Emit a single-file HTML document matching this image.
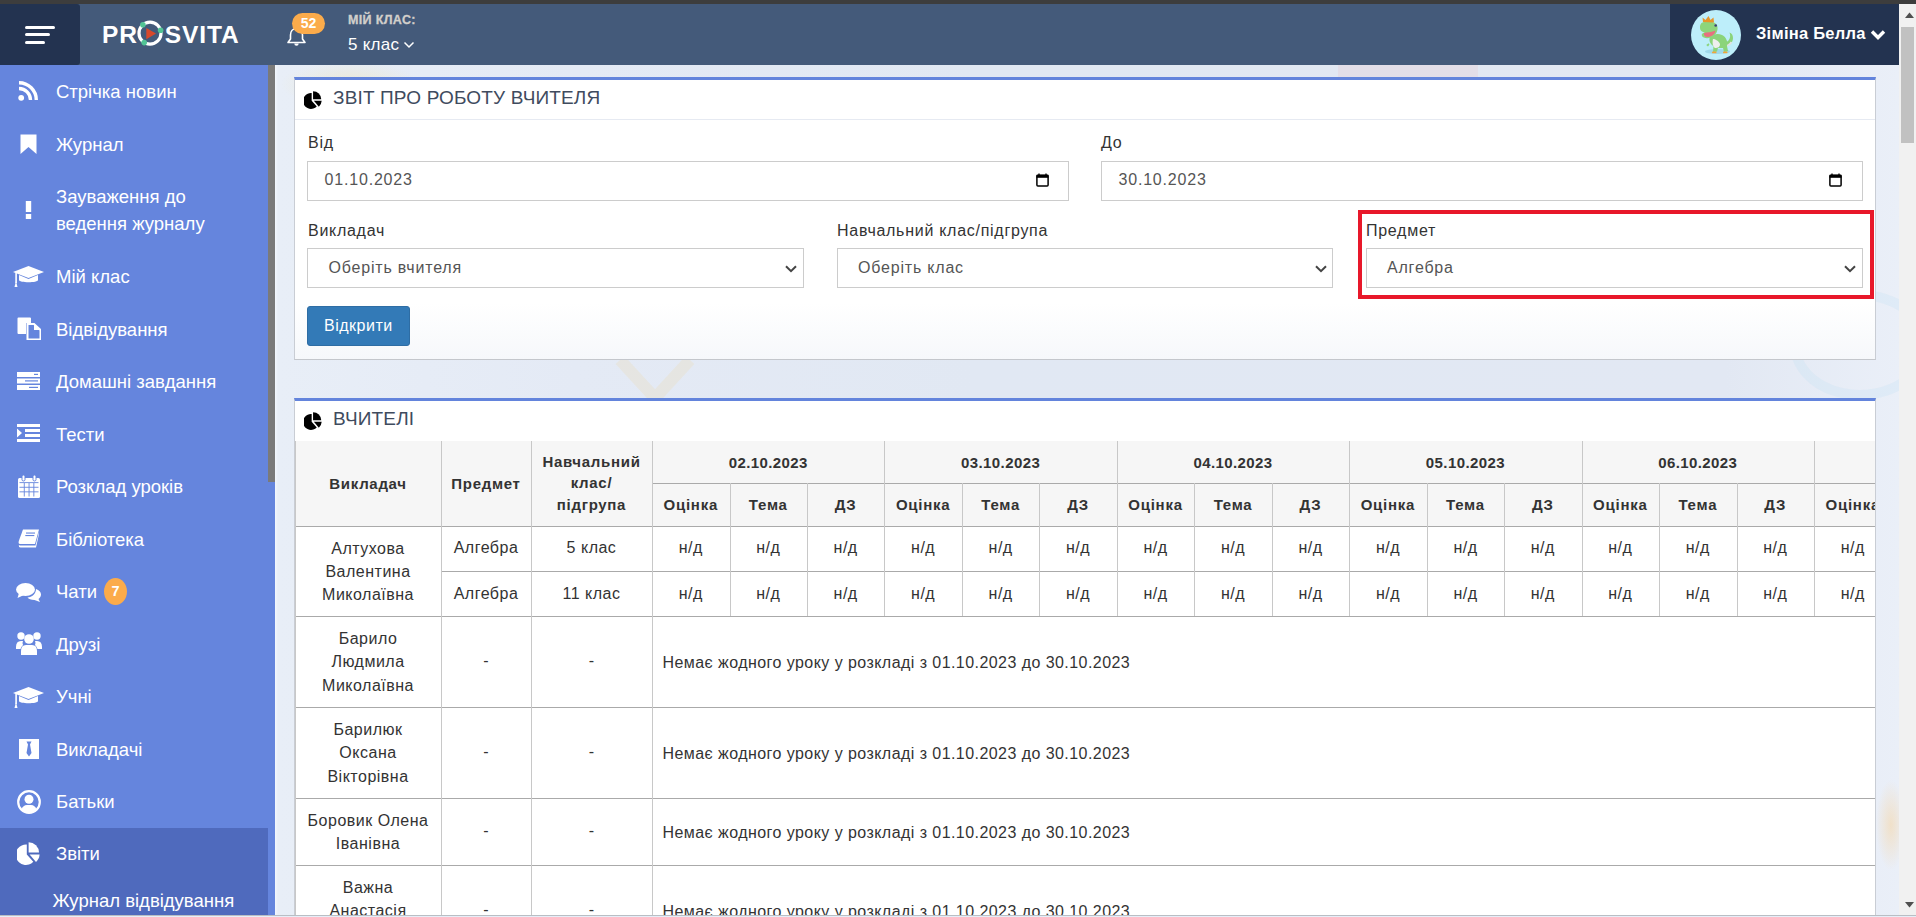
<!DOCTYPE html>
<html><head><meta charset="utf-8">
<style>
*{box-sizing:border-box;margin:0;padding:0}
html,body{width:1916px;height:917px;overflow:hidden;font-family:"Liberation Sans",sans-serif;background:#e3e9f4}
.abs{position:absolute}
#topstrip{left:0;top:0;width:1916px;height:4px;background:#3d3d3d}
#hdr{left:0;top:4px;width:1899px;height:61px;background:#445a7a}
#burger{left:0;top:4px;width:80px;height:61px;background:#233350;border-radius:0 3px 3px 0}
#burger i{position:absolute;left:25px;height:3px;background:#fff;border-radius:2px}
#user{left:1670px;top:4px;width:229px;height:61px;background:#233350}
#vscroll{left:1899px;top:4px;width:17px;height:913px;background:#f1f1f1}
#side{left:0;top:65px;width:275px;height:852px;background:#6585dd;overflow:hidden}
#sthumb{left:268px;top:65px;width:7px;height:417px;background:#7a7a7a}
.nav{position:absolute;left:0;width:268px;color:#fff;font-size:18.5px;line-height:26.5px}
.navt{left:56px;color:#fff;font-size:18.5px;line-height:26.5px;white-space:nowrap}
.nav .t{position:absolute;left:56px;white-space:nowrap}
.nav svg{position:absolute}
#content{left:275px;top:65px;width:1624px;height:852px;overflow:hidden;background:linear-gradient(90deg,#f3f7fd 0px,#e8eef7 3px,#e4eaf5 300px,#e1e8f3 700px,#e2e8f3 1450px,#eaeff8 1624px)}
.panel{position:absolute;left:20px;width:1580px;background:#fff;border-top:3px solid #6384dc;border-left:1px solid #cfd3da;border-right:1px solid #d8dce3}
.ptitle{position:absolute;left:38px;font-size:19px;letter-spacing:0.15px;color:#3f4b5e;white-space:nowrap}
.lbl{position:absolute;font-size:16px;color:#333;white-space:nowrap;letter-spacing:0.72px}
.inp{position:absolute;height:40px;border:1px solid #cccccc;background:#fff;font-size:16px;color:#555}
.inp .v{position:absolute;top:10px;white-space:nowrap}
</style></head><body>
<div id="topstrip" class="abs"></div>
<div id="hdr" class="abs"></div>
<div id="burger" class="abs"><i style="top:22px;width:30px"></i><i style="top:29px;width:25px"></i><i style="top:37px;width:20px"></i></div>
<div id="user" class="abs"></div>
<!-- logo -->
<div class="abs" style="left:102px;top:19.5px;height:30px;font-size:24.5px;font-weight:bold;color:#fff;letter-spacing:0.9px;line-height:30px;white-space:nowrap">PR<span style="display:inline-block;width:27px"></span>SVITA</div>
<svg class="abs" style="left:136px;top:19px" width="30" height="30" viewBox="0 0 30 30">
<circle cx="14" cy="14.2" r="11" fill="none" stroke="#fff" stroke-width="3.2"/>
<path d="M10.3 8.9 L20 14.6 L10.3 20.3 Z" fill="#d9482b"/>
<circle cx="6.9" cy="5.8" r="2.8" fill="#52c495"/><circle cx="24.6" cy="11.3" r="2.8" fill="#52c495"/><circle cx="8.2" cy="23.6" r="2.8" fill="#52c495"/>
</svg>
<!-- bell -->
<svg class="abs" style="left:286px;top:26px" width="21" height="21" viewBox="0 0 21 21">
<path d="M10.5 2.5 C6.5 2.5 4.5 5.5 4.5 9 L4.5 13 L2 16.5 L19 16.5 L16.5 13 L16.5 9 C16.5 5.5 14.5 2.5 10.5 2.5 Z" fill="none" stroke="#fff" stroke-width="1.6" stroke-linejoin="round"/>
<path d="M8.3 17.5 a2.2 2.2 0 0 0 4.4 0 Z" fill="#fff"/>
</svg>
<div class="abs" style="left:292px;top:13px;width:33px;height:21px;border-radius:11px;background:#fbab4b;color:#fff;font-weight:bold;font-size:14px;line-height:21px;text-align:center">52</div>
<div class="abs" style="left:348px;top:12px;font-size:12.5px;font-weight:bold;color:#d2cfcb;line-height:16px;white-space:nowrap;letter-spacing:0.35px;-webkit-text-stroke:0.3px #d2cfcb">МІЙ КЛАС:</div>
<div class="abs" style="left:348px;top:34px;font-size:17px;color:#fff;line-height:22px;white-space:nowrap;letter-spacing:0.25px">5 клас</div>
<svg class="abs" style="left:403px;top:40px" width="12" height="10" viewBox="0 0 12 10"><path d="M1.5 2.5 L6 7 L10.5 2.5" fill="none" stroke="#fff" stroke-width="1.5"/></svg>
<!-- user -->
<div class="abs" style="left:1691px;top:10px;width:50px;height:50px;border-radius:50%;background:#bdeefa;overflow:hidden">
<svg width="50" height="50" viewBox="0 0 50 50">
<ellipse cx="26.5" cy="41.5" rx="12.5" ry="2.6" fill="#9fd9ea"/>
<path d="M32 36.5 C37 37 42 33.5 42 28 C42 25 40.5 23 38.5 22.5 C39.5 25 39.5 28 37.5 30.5 C36 32 34 32.5 32 32 Z" fill="#8bd47a"/>
<path d="M33 36 C36 36 39 34.5 40.5 32" fill="none" stroke="#e2e2e2" stroke-width="1.6"/>
<path d="M19 27 C22 24 27 23 31 25 C35 27 37 31 36 36 L37 41 L33 42 L32 38 L27 38 L26 41.5 L22 42 L22.5 36 C19 34 17.5 30 19 27 Z" fill="#8bd47a"/>
<path d="M22 29 C24 29 28 31 29 34 C29 37 27 38 24 38 C22 37 21 33 22 29 Z" fill="#eeeeee"/>
<path d="M9 18 C8.5 13 12 11 17 11.5 C22 11.5 26 13 26.5 17 C27 21 25 25.5 20 27.5 C16 29 12 28 11 26 C10 24 11.5 23 14 22.5 C11 22 9 20.5 9 18 Z" fill="#8dd57b"/>
<path d="M13 23 C16 22.5 21 22 24.5 20.5 C24 24 21 26.5 17 27 C14 27.3 12.5 25 13 23 Z" fill="#e7707f"/>
<circle cx="24.7" cy="15.5" r="1.3" fill="#3c3f7a"/>
<path d="M12 12 L11.5 7.5 L14.5 10 L17.5 6 L19.5 10 L22.5 7.5 L23 12.5 Z" fill="#e7962b"/>
<path d="M18 34 L16.5 35 L17.5 36" fill="none" stroke="#8bd47a" stroke-width="1.6"/>
<rect x="21" y="41.5" width="4.5" height="1.8" rx="0.9" fill="#f1a63a"/><rect x="32" y="41.5" width="4.5" height="1.8" rx="0.9" fill="#f1a63a"/>
</svg></div>
<div class="abs" style="left:1756px;top:21.5px;font-size:16.5px;font-weight:bold;color:#fff;line-height:22px;white-space:nowrap;letter-spacing:0.25px">Зіміна Белла</div>
<svg class="abs" style="left:1870px;top:28px" width="16" height="13" viewBox="0 0 16 13"><path d="M2 3.5 L8 9.5 L14 3.5" fill="none" stroke="#fff" stroke-width="3.4"/></svg>
<!-- scrollbar -->
<div id="vscroll" class="abs"></div>
<svg class="abs" style="left:1899px;top:4px" width="17" height="22" viewBox="0 0 17 22"><path d="M6 14 L10.5 8.5 L15 14 Z" fill="#505050"/></svg>
<div class="abs" style="left:1901px;top:27px;width:13px;height:116px;background:#c1c1c1"></div>
<div id="side" class="abs"></div>
<div id="sthumb" class="abs"></div>
<div class="abs" style="left:0;top:828px;width:268px;height:89px;background:#4f6abd"></div>
<div class="abs navt" style="top:78.53px">Стрічка новин</div>
<div class="abs navt" style="top:131.53px">Журнал</div>
<div class="abs navt" style="top:184.33px">Зауваження до<br>ведення журналу</div>
<div class="abs navt" style="top:264.13px">Мій клас</div>
<div class="abs navt" style="top:316.63px">Відвідування</div>
<div class="abs navt" style="top:369.13px">Домашні завдання</div>
<div class="abs navt" style="top:421.63px">Тести</div>
<div class="abs navt" style="top:474.13px">Розклад уроків</div>
<div class="abs navt" style="top:526.63px">Бібліотека</div>
<div class="abs navt" style="top:579.13px">Чати</div>
<div class="abs navt" style="top:631.63px">Друзі</div>
<div class="abs navt" style="top:684.13px">Учні</div>
<div class="abs navt" style="top:736.63px">Викладачі</div>
<div class="abs navt" style="top:789.13px">Батьки</div>
<div class="abs navt" style="top:841.13px">Звіти</div>
<div class="abs navt" style="left:52.5px;top:888.4px">Журнал відвідування</div>
<div class="abs" style="left:104px;top:578px;width:23px;height:27px;border-radius:50%;background:#fbab4b;color:#fff;font-weight:bold;font-size:14.5px;line-height:27px;text-align:center">7</div>

<svg class="abs" style="left:18px;top:81px" width="21" height="20" viewBox="0 0 21 20"><circle cx="3.2" cy="16.8" r="2.9" fill="#fff"/><path d="M1 7.5 A11.5 11.5 0 0 1 12.5 19" fill="none" stroke="#fff" stroke-width="3.4"/><path d="M1 1.7 A17.3 17.3 0 0 1 18.3 19" fill="none" stroke="#fff" stroke-width="3.4"/></svg>
<svg class="abs" style="left:20px;top:134px" width="17" height="20" viewBox="0 0 17 20"><path d="M0.5 0.5 H16.5 V20 L8.5 13 L0.5 20 Z" fill="#fff"/></svg>
<svg class="abs" style="left:25px;top:201px" width="7" height="18" viewBox="0 0 7 18"><rect x="0.8" y="0" width="5.4" height="11" fill="#fff"/><rect x="0.8" y="13" width="5.4" height="5" fill="#fff"/></svg>
<svg class="abs" style="left:13px;top:266px" width="31" height="21" viewBox="0 0 31 21"><path d="M15.5 0 L31 6 L15.5 12 L0 6 Z" fill="#fff"/><path d="M6 9 L6 14 C6 17 25 17 25 14 L25 9 L15.5 13 Z" fill="#fff"/><rect x="2.3" y="7" width="1.6" height="10" fill="#fff"/><path d="M1.5 21 L3 15 L4.5 21 Z" fill="#fff"/></svg>
<svg class="abs" style="left:17px;top:317px" width="24" height="23" viewBox="0 0 24 23"><path d="M0.5 1.5 Q0.5 0.5 1.5 0.5 H13 Q14 0.5 14 1.5 V6 H9 V17 H1.5 Q0.5 17 0.5 16 Z" fill="#fff"/><path d="M10.5 7 H17 L23.5 13 V22.5 H10.5 Z" fill="none" stroke="#fff" stroke-width="2"/><path d="M17 7 V13 H23.5" fill="#fff"/></svg>
<svg class="abs" style="left:17px;top:372px" width="23" height="18" viewBox="0 0 23 18"><rect x="0" y="0" width="23" height="5" fill="#fff"/><rect x="0" y="6.5" width="23" height="5" fill="#fff"/><rect x="0" y="13" width="23" height="5" fill="#fff"/><rect x="17" y="1.8" width="4" height="1.2" fill="#6585dd"/><rect x="8" y="8.3" width="13" height="1.2" fill="#6585dd"/><rect x="12" y="14.8" width="9" height="1.2" fill="#6585dd"/></svg>
<svg class="abs" style="left:17px;top:424px" width="23" height="18" viewBox="0 0 23 18"><rect x="0" y="0" width="23" height="3" fill="#fff"/><rect x="8" y="5" width="15" height="3" fill="#fff"/><rect x="8" y="10" width="15" height="3" fill="#fff"/><rect x="0" y="15" width="23" height="3" fill="#fff"/><path d="M0 4.5 L5 9 L0 13.5 Z" fill="#fff"/></svg>
<svg class="abs" style="left:18px;top:475px" width="22" height="23" viewBox="0 0 22 23"><rect x="0" y="3" width="22" height="20" rx="1.5" fill="#fff"/><rect x="4" y="0" width="3" height="6" rx="1.5" fill="#fff" stroke="#6585dd" stroke-width="1"/><rect x="15" y="0" width="3" height="6" rx="1.5" fill="#fff" stroke="#6585dd" stroke-width="1"/><g fill="#6585dd"><rect x="5.8" y="8" width="0.9" height="13.5"/><rect x="10.6" y="8" width="0.9" height="13.5"/><rect x="15.4" y="8" width="0.9" height="13.5"/><rect x="1.5" y="11.8" width="19" height="0.9"/><rect x="1.5" y="16.4" width="19" height="0.9"/><rect x="1.5" y="7.2" width="19" height="0.9"/></g></svg>
<svg class="abs" style="left:18px;top:529px" width="22" height="20" viewBox="0 0 22 20"><path d="M5 0.5 H21 L17 15 H2 Q0 15 0.8 12 Z" fill="#fff"/><path d="M2 16.5 H17.5 L21 3 V5 L18 18.5 H2.5 Q0.5 18.5 0.8 16 Z" fill="#fff"/><rect x="8" y="3.5" width="9" height="1.1" fill="#6585dd"/><rect x="7.3" y="6" width="9" height="1.1" fill="#6585dd"/></svg>
<svg class="abs" style="left:16px;top:583px" width="25" height="19" viewBox="0 0 25 19"><ellipse cx="9.5" cy="6.5" rx="9.5" ry="6.5" fill="#fff"/><path d="M3 10 L1.5 15 L8 12 Z" fill="#fff"/><path d="M20 6 C23 7 25 9 25 11.5 C25 13.5 23.5 15 22.5 16 L24 19 L18.5 17 C15 17 12.5 16 11.5 14.5 C16 14 20 11 20 6 Z" fill="#fff"/></svg>
<svg class="abs" style="left:16px;top:632px" width="26" height="23" viewBox="0 0 26 23"><circle cx="5" cy="4" r="3.7" fill="#fff"/><circle cx="21" cy="4" r="3.7" fill="#fff"/><circle cx="13" cy="7" r="4.8" fill="#fff"/><path d="M0 15 Q0 9 5 9 H7 Q6 11 7 13 Q5 15 4.5 17 H0 Z" fill="#fff"/><path d="M26 15 Q26 9 21 9 H19 Q20 11 19 13 Q21 15 21.5 17 H26 Z" fill="#fff"/><path d="M5 23 V19 Q5 13 10 13 H16 Q21 13 21 19 V23 Z" fill="#fff"/></svg>
<svg class="abs" style="left:13px;top:687px" width="31" height="21" viewBox="0 0 31 21"><path d="M15.5 0 L31 6 L15.5 12 L0 6 Z" fill="#fff"/><path d="M6 9 L6 14 C6 17 25 17 25 14 L25 9 L15.5 13 Z" fill="#fff"/><rect x="2.3" y="7" width="1.6" height="10" fill="#fff"/><path d="M1.5 21 L3 15 L4.5 21 Z" fill="#fff"/></svg>
<svg class="abs" style="left:19px;top:739px" width="20" height="20" viewBox="0 0 20 20"><rect x="0" y="0" width="20" height="20" fill="#fff"/><path d="M7.5 2.5 H12.5 L11 5.5 L12.5 14 L10 17.5 L7.5 14 L9 5.5 Z" fill="#6585dd"/></svg>
<svg class="abs" style="left:17px;top:790px" width="24" height="24" viewBox="0 0 24 24"><circle cx="12" cy="12" r="10.8" fill="none" stroke="#fff" stroke-width="2.2"/><circle cx="12" cy="9.3" r="4.5" fill="#fff"/><path d="M4.5 19.5 Q6 15 10 15 H14 Q18 15 19.5 19.5 Q16.5 22.8 12 22.8 Q7.5 22.8 4.5 19.5 Z" fill="#fff"/></svg>
<svg class="abs" style="left:17px;top:842px" width="23" height="23" viewBox="0 0 23 23"><path d="M9.8 2.6 V12.4 L16.3 19.8 A10.2 10.2 0 1 1 9.8 2.6 Z" fill="#fff"/><path d="M11.6 0.3 A10.4 10.4 0 0 1 22 10.6 H11.6 Z" fill="#fff"/><path d="M12.6 12.6 H22.6 A10.6 10.6 0 0 1 19 20 Z" fill="#fff"/></svg>

<div id="content" class="abs">
<div class="abs" style="left:5px;top:-3px;width:140px;height:45px;border-radius:50%;background:radial-gradient(closest-side,rgba(240,228,170,0.45),rgba(240,228,170,0));"></div>
<div class="abs" style="left:1063px;top:0px;width:140px;height:12px;background:rgba(230,190,200,0.25)"></div>
<svg class="abs" style="left:335px;top:293px" width="90" height="42" viewBox="0 0 90 42"><path d="M10 2 L45 40 L80 2" fill="none" stroke="rgba(235,215,160,0.22)" stroke-width="12"/></svg>
<div class="abs" style="left:1515px;top:225px;width:140px;height:110px;border-radius:50%;border:10px solid rgba(190,225,245,0.25)"></div>
<div class="abs" style="left:1601px;top:715px;width:30px;height:90px;background:radial-gradient(closest-side,rgba(245,215,170,0.6),rgba(245,215,170,0))"></div>
</div>
<div class="abs" style="left:294px;top:77px;width:1582px;height:283px;background:linear-gradient(#fff 0%,#fff 80%,#f6f8fb 100%);border-top:3px solid #6384dc;border-left:1px solid #c9cdd4;border-right:1px solid #c9cdd4;border-bottom:1.5px solid #c4c7cc"></div>
<div class="abs" style="left:295px;top:119px;width:1580px;height:1px;background:#e6eaf2"></div>
<svg class="abs" style="left:304px;top:91px" width="18" height="18" viewBox="0 0 23 23"><path d="M9.8 2.6 V12.4 L16.3 19.8 A10.2 10.2 0 1 1 9.8 2.6 Z" fill="#000"/><path d="M11.6 0.3 A10.4 10.4 0 0 1 22 10.6 H11.6 Z" fill="#000"/><path d="M12.6 12.6 H22.6 A10.6 10.6 0 0 1 19 20 Z" fill="#000"/></svg>
<div class="abs ptitle" style="left:333px;top:86.3px;line-height:24px">ЗВІТ ПРО РОБОТУ ВЧИТЕЛЯ</div>
<div class="abs lbl" style="left:308px;top:133.3px;line-height:20px">Від</div>
<div class="abs lbl" style="left:1101px;top:133.3px;line-height:20px">До</div>
<div class="abs lbl" style="left:308px;top:221.1px;line-height:20px">Викладач</div>
<div class="abs lbl" style="left:837px;top:221.1px;line-height:20px">Навчальний клас/підгрупа</div>
<div class="abs lbl" style="left:1366px;top:221.1px;line-height:20px">Предмет</div>
<div class="abs" style="left:307px;top:161px;width:762px;height:40px;border:1px solid #cccccc;background:#fff"></div><div class="abs" style="left:324.6px;top:169.9px;font-size:16px;line-height:20px;color:#555;white-space:nowrap;letter-spacing:0.8px">01.10.2023</div><svg class="abs" style="left:1036px;top:173px" width="13" height="14" viewBox="0 0 13 14"><path d="M3 0.5 V2 M10 0.5 V2" stroke="#000" stroke-width="1.3"/><rect x="0.9" y="2.2" width="11.2" height="10.9" rx="1" fill="none" stroke="#000" stroke-width="1.5"/><rect x="0.5" y="1.8" width="12" height="3" fill="#000"/></svg>
<div class="abs" style="left:1101px;top:161px;width:762px;height:40px;border:1px solid #cccccc;background:#fff"></div><div class="abs" style="left:1118.5px;top:169.9px;font-size:16px;line-height:20px;color:#555;white-space:nowrap;letter-spacing:0.8px">30.10.2023</div><svg class="abs" style="left:1829px;top:173px" width="13" height="14" viewBox="0 0 13 14"><path d="M3 0.5 V2 M10 0.5 V2" stroke="#000" stroke-width="1.3"/><rect x="0.9" y="2.2" width="11.2" height="10.9" rx="1" fill="none" stroke="#000" stroke-width="1.5"/><rect x="0.5" y="1.8" width="12" height="3" fill="#000"/></svg>
<div class="abs" style="left:307px;top:248px;width:497px;height:40px;border:1px solid #cccccc;background:#fff"></div><div class="abs" style="left:328.5px;top:258.1px;font-size:16px;line-height:20px;color:#555;white-space:nowrap;letter-spacing:0.8px">Оберіть вчителя</div><svg class="abs" style="left:785px;top:265px" width="12" height="8" viewBox="0 0 12 8"><path d="M1 1.2 L6 6.2 L11 1.2" fill="none" stroke="#444" stroke-width="2"/></svg>
<div class="abs" style="left:837px;top:248px;width:496px;height:40px;border:1px solid #cccccc;background:#fff"></div><div class="abs" style="left:858.0px;top:258.1px;font-size:16px;line-height:20px;color:#555;white-space:nowrap;letter-spacing:0.8px">Оберіть клас</div><svg class="abs" style="left:1315px;top:265px" width="12" height="8" viewBox="0 0 12 8"><path d="M1 1.2 L6 6.2 L11 1.2" fill="none" stroke="#444" stroke-width="2"/></svg>
<div class="abs" style="left:1366px;top:248px;width:497px;height:40px;border:1px solid #cccccc;background:#fff"></div><div class="abs" style="left:1387.0px;top:258.1px;font-size:16px;line-height:20px;color:#555;white-space:nowrap;letter-spacing:0.8px">Алгебра</div><svg class="abs" style="left:1844px;top:265px" width="12" height="8" viewBox="0 0 12 8"><path d="M1 1.2 L6 6.2 L11 1.2" fill="none" stroke="#444" stroke-width="2"/></svg>
<div class="abs" style="left:1358px;top:210px;width:516px;height:89px;border:4.5px solid #e8182a"></div>
<div class="abs" style="left:307px;top:306px;width:103px;height:40px;background:#337ab7;border:1px solid #2e6da4;border-radius:3px"></div>
<div class="abs" style="left:324px;top:315.8px;font-size:16px;line-height:20px;color:#fff;white-space:nowrap;letter-spacing:0.5px">Відкрити</div>
<!--TABLE-->
<div class="abs" style="left:0;top:0;width:1876px;height:917px;overflow:hidden"><div class="abs" style="left:294px;top:398px;width:1582px;height:530px;background:#fff;border-top:3px solid #6384dc;border-left:1px solid #c9cdd4;border-right:1px solid #c9cdd4"></div>
<svg class="abs" style="left:304px;top:412px" width="18" height="18" viewBox="0 0 23 23"><path d="M9.8 2.6 V12.4 L16.3 19.8 A10.2 10.2 0 1 1 9.8 2.6 Z" fill="#000"/><path d="M11.6 0.3 A10.4 10.4 0 0 1 22 10.6 H11.6 Z" fill="#000"/><path d="M12.6 12.6 H22.6 A10.6 10.6 0 0 1 19 20 Z" fill="#000"/></svg>
<div class="abs ptitle" style="left:333px;top:407.3px;line-height:24px">ВЧИТЕЛІ</div>
<div class="abs" style="left:295px;top:441px;width:1580px;height:85px;background:#f6f6f6"></div>
<div class="abs" style="left:295.0px;top:526.0px;width:1580.0px;height:1px;background:#aaaaaa"></div>
<div class="abs" style="left:295.0px;top:616.0px;width:1580.0px;height:1px;background:#aaaaaa"></div>
<div class="abs" style="left:295.0px;top:707.0px;width:1580.0px;height:1px;background:#aaaaaa"></div>
<div class="abs" style="left:295.0px;top:798.0px;width:1580.0px;height:1px;background:#aaaaaa"></div>
<div class="abs" style="left:295.0px;top:865.0px;width:1580.0px;height:1px;background:#aaaaaa"></div>
<div class="abs" style="left:652.0px;top:483.0px;width:1223.0px;height:1px;background:#aaaaaa"></div>
<div class="abs" style="left:441.0px;top:571.0px;width:1434.0px;height:1px;background:#aaaaaa"></div>
<div class="abs" style="left:295.0px;top:441.0px;width:1px;height:476.0px;background:#c8c8c8"></div>
<div class="abs" style="left:441.0px;top:441.0px;width:1px;height:476.0px;background:#c8c8c8"></div>
<div class="abs" style="left:531.0px;top:441.0px;width:1px;height:476.0px;background:#c8c8c8"></div>
<div class="abs" style="left:652.0px;top:441.0px;width:1px;height:476.0px;background:#c8c8c8"></div>
<div class="abs" style="left:884.4px;top:441.0px;width:1px;height:175.0px;background:#c8c8c8"></div>
<div class="abs" style="left:1116.8px;top:441.0px;width:1px;height:175.0px;background:#c8c8c8"></div>
<div class="abs" style="left:1349.2px;top:441.0px;width:1px;height:175.0px;background:#c8c8c8"></div>
<div class="abs" style="left:1581.6px;top:441.0px;width:1px;height:175.0px;background:#c8c8c8"></div>
<div class="abs" style="left:1814.0px;top:441.0px;width:1px;height:175.0px;background:#c8c8c8"></div>
<div class="abs" style="left:729.5px;top:483.0px;width:1px;height:133.0px;background:#c8c8c8"></div>
<div class="abs" style="left:806.9px;top:483.0px;width:1px;height:133.0px;background:#c8c8c8"></div>
<div class="abs" style="left:961.9px;top:483.0px;width:1px;height:133.0px;background:#c8c8c8"></div>
<div class="abs" style="left:1039.3px;top:483.0px;width:1px;height:133.0px;background:#c8c8c8"></div>
<div class="abs" style="left:1194.3px;top:483.0px;width:1px;height:133.0px;background:#c8c8c8"></div>
<div class="abs" style="left:1271.7px;top:483.0px;width:1px;height:133.0px;background:#c8c8c8"></div>
<div class="abs" style="left:1426.7px;top:483.0px;width:1px;height:133.0px;background:#c8c8c8"></div>
<div class="abs" style="left:1504.1px;top:483.0px;width:1px;height:133.0px;background:#c8c8c8"></div>
<div class="abs" style="left:1659.1px;top:483.0px;width:1px;height:133.0px;background:#c8c8c8"></div>
<div class="abs" style="left:1736.5px;top:483.0px;width:1px;height:133.0px;background:#c8c8c8"></div>
<div class="abs" style="left:1891.5px;top:483.0px;width:1px;height:133.0px;background:#c8c8c8"></div>
<div class="abs" style="left:1968.9px;top:483.0px;width:1px;height:133.0px;background:#c8c8c8"></div>
<div class="abs" style="left:295.0px;width:146.0px;top:473.4px;font-size:15px;line-height:21.0px;text-align:center;color:#333;font-weight:bold;letter-spacing:0.7px;white-space:nowrap">Викладач</div>
<div class="abs" style="left:441.0px;width:90.0px;top:473.4px;font-size:15px;line-height:21.0px;text-align:center;color:#333;font-weight:bold;letter-spacing:0.7px;white-space:nowrap">Предмет</div>
<div class="abs" style="left:531.0px;width:121.0px;top:450.6px;font-size:15px;line-height:21.6px;text-align:center;color:#333;font-weight:bold;letter-spacing:0.7px;white-space:nowrap">Навчальний<br>клас/<br>підгрупа</div>
<div class="abs" style="left:652.0px;width:232.4px;top:452.2px;font-size:15px;line-height:21.0px;text-align:center;color:#333;font-weight:bold;letter-spacing:0.4px;white-space:nowrap">02.10.2023</div>
<div class="abs" style="left:652.0px;width:77.5px;top:494.2px;font-size:15px;line-height:21.0px;text-align:center;color:#333;font-weight:bold;letter-spacing:0.75px;white-space:nowrap">Оцінка</div>
<div class="abs" style="left:729.5px;width:77.5px;top:494.2px;font-size:15px;line-height:21.0px;text-align:center;color:#333;font-weight:bold;letter-spacing:0.75px;white-space:nowrap">Тема</div>
<div class="abs" style="left:806.9px;width:77.5px;top:494.2px;font-size:15px;line-height:21.0px;text-align:center;color:#333;font-weight:bold;letter-spacing:0.75px;white-space:nowrap">ДЗ</div>
<div class="abs" style="left:884.4px;width:232.4px;top:452.2px;font-size:15px;line-height:21.0px;text-align:center;color:#333;font-weight:bold;letter-spacing:0.4px;white-space:nowrap">03.10.2023</div>
<div class="abs" style="left:884.4px;width:77.5px;top:494.2px;font-size:15px;line-height:21.0px;text-align:center;color:#333;font-weight:bold;letter-spacing:0.75px;white-space:nowrap">Оцінка</div>
<div class="abs" style="left:961.9px;width:77.5px;top:494.2px;font-size:15px;line-height:21.0px;text-align:center;color:#333;font-weight:bold;letter-spacing:0.75px;white-space:nowrap">Тема</div>
<div class="abs" style="left:1039.3px;width:77.5px;top:494.2px;font-size:15px;line-height:21.0px;text-align:center;color:#333;font-weight:bold;letter-spacing:0.75px;white-space:nowrap">ДЗ</div>
<div class="abs" style="left:1116.8px;width:232.4px;top:452.2px;font-size:15px;line-height:21.0px;text-align:center;color:#333;font-weight:bold;letter-spacing:0.4px;white-space:nowrap">04.10.2023</div>
<div class="abs" style="left:1116.8px;width:77.5px;top:494.2px;font-size:15px;line-height:21.0px;text-align:center;color:#333;font-weight:bold;letter-spacing:0.75px;white-space:nowrap">Оцінка</div>
<div class="abs" style="left:1194.3px;width:77.5px;top:494.2px;font-size:15px;line-height:21.0px;text-align:center;color:#333;font-weight:bold;letter-spacing:0.75px;white-space:nowrap">Тема</div>
<div class="abs" style="left:1271.7px;width:77.5px;top:494.2px;font-size:15px;line-height:21.0px;text-align:center;color:#333;font-weight:bold;letter-spacing:0.75px;white-space:nowrap">ДЗ</div>
<div class="abs" style="left:1349.2px;width:232.4px;top:452.2px;font-size:15px;line-height:21.0px;text-align:center;color:#333;font-weight:bold;letter-spacing:0.4px;white-space:nowrap">05.10.2023</div>
<div class="abs" style="left:1349.2px;width:77.5px;top:494.2px;font-size:15px;line-height:21.0px;text-align:center;color:#333;font-weight:bold;letter-spacing:0.75px;white-space:nowrap">Оцінка</div>
<div class="abs" style="left:1426.7px;width:77.5px;top:494.2px;font-size:15px;line-height:21.0px;text-align:center;color:#333;font-weight:bold;letter-spacing:0.75px;white-space:nowrap">Тема</div>
<div class="abs" style="left:1504.1px;width:77.5px;top:494.2px;font-size:15px;line-height:21.0px;text-align:center;color:#333;font-weight:bold;letter-spacing:0.75px;white-space:nowrap">ДЗ</div>
<div class="abs" style="left:1581.6px;width:232.4px;top:452.2px;font-size:15px;line-height:21.0px;text-align:center;color:#333;font-weight:bold;letter-spacing:0.4px;white-space:nowrap">06.10.2023</div>
<div class="abs" style="left:1581.6px;width:77.5px;top:494.2px;font-size:15px;line-height:21.0px;text-align:center;color:#333;font-weight:bold;letter-spacing:0.75px;white-space:nowrap">Оцінка</div>
<div class="abs" style="left:1659.1px;width:77.5px;top:494.2px;font-size:15px;line-height:21.0px;text-align:center;color:#333;font-weight:bold;letter-spacing:0.75px;white-space:nowrap">Тема</div>
<div class="abs" style="left:1736.5px;width:77.5px;top:494.2px;font-size:15px;line-height:21.0px;text-align:center;color:#333;font-weight:bold;letter-spacing:0.75px;white-space:nowrap">ДЗ</div>
<div class="abs" style="left:1814.0px;width:232.4px;top:452.2px;font-size:15px;line-height:21.0px;text-align:center;color:#333;font-weight:bold;letter-spacing:0.4px;white-space:nowrap">07.10.2023</div>
<div class="abs" style="left:1814.0px;width:77.5px;top:494.2px;font-size:15px;line-height:21.0px;text-align:center;color:#333;font-weight:bold;letter-spacing:0.75px;white-space:nowrap">Оцінка</div>
<div class="abs" style="left:1891.5px;width:77.5px;top:494.2px;font-size:15px;line-height:21.0px;text-align:center;color:#333;font-weight:bold;letter-spacing:0.75px;white-space:nowrap">Тема</div>
<div class="abs" style="left:1968.9px;width:77.5px;top:494.2px;font-size:15px;line-height:21.0px;text-align:center;color:#333;font-weight:bold;letter-spacing:0.75px;white-space:nowrap">ДЗ</div>
<div class="abs" style="left:295.0px;width:146.0px;top:536.6px;font-size:16px;line-height:23.0px;text-align:center;color:#333;letter-spacing:0.5px;white-space:nowrap">Алтухова<br>Валентина<br>Миколаївна</div>
<div class="abs" style="left:441.0px;width:90.0px;top:537.3px;font-size:16px;line-height:22.4px;text-align:center;color:#333;letter-spacing:0.5px;white-space:nowrap">Алгебра</div>
<div class="abs" style="left:531.0px;width:121.0px;top:537.3px;font-size:16px;line-height:22.4px;text-align:center;color:#333;letter-spacing:0.5px;white-space:nowrap">5 клас</div>
<div class="abs" style="left:652.0px;width:77.5px;top:537.3px;font-size:16px;line-height:22.4px;text-align:center;color:#333;letter-spacing:0.5px;white-space:nowrap">н/д</div>
<div class="abs" style="left:729.5px;width:77.5px;top:537.3px;font-size:16px;line-height:22.4px;text-align:center;color:#333;letter-spacing:0.5px;white-space:nowrap">н/д</div>
<div class="abs" style="left:806.9px;width:77.5px;top:537.3px;font-size:16px;line-height:22.4px;text-align:center;color:#333;letter-spacing:0.5px;white-space:nowrap">н/д</div>
<div class="abs" style="left:884.4px;width:77.5px;top:537.3px;font-size:16px;line-height:22.4px;text-align:center;color:#333;letter-spacing:0.5px;white-space:nowrap">н/д</div>
<div class="abs" style="left:961.9px;width:77.5px;top:537.3px;font-size:16px;line-height:22.4px;text-align:center;color:#333;letter-spacing:0.5px;white-space:nowrap">н/д</div>
<div class="abs" style="left:1039.3px;width:77.5px;top:537.3px;font-size:16px;line-height:22.4px;text-align:center;color:#333;letter-spacing:0.5px;white-space:nowrap">н/д</div>
<div class="abs" style="left:1116.8px;width:77.5px;top:537.3px;font-size:16px;line-height:22.4px;text-align:center;color:#333;letter-spacing:0.5px;white-space:nowrap">н/д</div>
<div class="abs" style="left:1194.3px;width:77.5px;top:537.3px;font-size:16px;line-height:22.4px;text-align:center;color:#333;letter-spacing:0.5px;white-space:nowrap">н/д</div>
<div class="abs" style="left:1271.7px;width:77.5px;top:537.3px;font-size:16px;line-height:22.4px;text-align:center;color:#333;letter-spacing:0.5px;white-space:nowrap">н/д</div>
<div class="abs" style="left:1349.2px;width:77.5px;top:537.3px;font-size:16px;line-height:22.4px;text-align:center;color:#333;letter-spacing:0.5px;white-space:nowrap">н/д</div>
<div class="abs" style="left:1426.7px;width:77.5px;top:537.3px;font-size:16px;line-height:22.4px;text-align:center;color:#333;letter-spacing:0.5px;white-space:nowrap">н/д</div>
<div class="abs" style="left:1504.1px;width:77.5px;top:537.3px;font-size:16px;line-height:22.4px;text-align:center;color:#333;letter-spacing:0.5px;white-space:nowrap">н/д</div>
<div class="abs" style="left:1581.6px;width:77.5px;top:537.3px;font-size:16px;line-height:22.4px;text-align:center;color:#333;letter-spacing:0.5px;white-space:nowrap">н/д</div>
<div class="abs" style="left:1659.1px;width:77.5px;top:537.3px;font-size:16px;line-height:22.4px;text-align:center;color:#333;letter-spacing:0.5px;white-space:nowrap">н/д</div>
<div class="abs" style="left:1736.5px;width:77.5px;top:537.3px;font-size:16px;line-height:22.4px;text-align:center;color:#333;letter-spacing:0.5px;white-space:nowrap">н/д</div>
<div class="abs" style="left:1814.0px;width:77.5px;top:537.3px;font-size:16px;line-height:22.4px;text-align:center;color:#333;letter-spacing:0.5px;white-space:nowrap">н/д</div>
<div class="abs" style="left:1891.5px;width:77.5px;top:537.3px;font-size:16px;line-height:22.4px;text-align:center;color:#333;letter-spacing:0.5px;white-space:nowrap">н/д</div>
<div class="abs" style="left:1968.9px;width:77.5px;top:537.3px;font-size:16px;line-height:22.4px;text-align:center;color:#333;letter-spacing:0.5px;white-space:nowrap">н/д</div>
<div class="abs" style="left:441.0px;width:90.0px;top:582.9px;font-size:16px;line-height:22.4px;text-align:center;color:#333;letter-spacing:0.5px;white-space:nowrap">Алгебра</div>
<div class="abs" style="left:531.0px;width:121.0px;top:582.9px;font-size:16px;line-height:22.4px;text-align:center;color:#333;letter-spacing:0.5px;white-space:nowrap">11 клас</div>
<div class="abs" style="left:652.0px;width:77.5px;top:582.9px;font-size:16px;line-height:22.4px;text-align:center;color:#333;letter-spacing:0.5px;white-space:nowrap">н/д</div>
<div class="abs" style="left:729.5px;width:77.5px;top:582.9px;font-size:16px;line-height:22.4px;text-align:center;color:#333;letter-spacing:0.5px;white-space:nowrap">н/д</div>
<div class="abs" style="left:806.9px;width:77.5px;top:582.9px;font-size:16px;line-height:22.4px;text-align:center;color:#333;letter-spacing:0.5px;white-space:nowrap">н/д</div>
<div class="abs" style="left:884.4px;width:77.5px;top:582.9px;font-size:16px;line-height:22.4px;text-align:center;color:#333;letter-spacing:0.5px;white-space:nowrap">н/д</div>
<div class="abs" style="left:961.9px;width:77.5px;top:582.9px;font-size:16px;line-height:22.4px;text-align:center;color:#333;letter-spacing:0.5px;white-space:nowrap">н/д</div>
<div class="abs" style="left:1039.3px;width:77.5px;top:582.9px;font-size:16px;line-height:22.4px;text-align:center;color:#333;letter-spacing:0.5px;white-space:nowrap">н/д</div>
<div class="abs" style="left:1116.8px;width:77.5px;top:582.9px;font-size:16px;line-height:22.4px;text-align:center;color:#333;letter-spacing:0.5px;white-space:nowrap">н/д</div>
<div class="abs" style="left:1194.3px;width:77.5px;top:582.9px;font-size:16px;line-height:22.4px;text-align:center;color:#333;letter-spacing:0.5px;white-space:nowrap">н/д</div>
<div class="abs" style="left:1271.7px;width:77.5px;top:582.9px;font-size:16px;line-height:22.4px;text-align:center;color:#333;letter-spacing:0.5px;white-space:nowrap">н/д</div>
<div class="abs" style="left:1349.2px;width:77.5px;top:582.9px;font-size:16px;line-height:22.4px;text-align:center;color:#333;letter-spacing:0.5px;white-space:nowrap">н/д</div>
<div class="abs" style="left:1426.7px;width:77.5px;top:582.9px;font-size:16px;line-height:22.4px;text-align:center;color:#333;letter-spacing:0.5px;white-space:nowrap">н/д</div>
<div class="abs" style="left:1504.1px;width:77.5px;top:582.9px;font-size:16px;line-height:22.4px;text-align:center;color:#333;letter-spacing:0.5px;white-space:nowrap">н/д</div>
<div class="abs" style="left:1581.6px;width:77.5px;top:582.9px;font-size:16px;line-height:22.4px;text-align:center;color:#333;letter-spacing:0.5px;white-space:nowrap">н/д</div>
<div class="abs" style="left:1659.1px;width:77.5px;top:582.9px;font-size:16px;line-height:22.4px;text-align:center;color:#333;letter-spacing:0.5px;white-space:nowrap">н/д</div>
<div class="abs" style="left:1736.5px;width:77.5px;top:582.9px;font-size:16px;line-height:22.4px;text-align:center;color:#333;letter-spacing:0.5px;white-space:nowrap">н/д</div>
<div class="abs" style="left:1814.0px;width:77.5px;top:582.9px;font-size:16px;line-height:22.4px;text-align:center;color:#333;letter-spacing:0.5px;white-space:nowrap">н/д</div>
<div class="abs" style="left:1891.5px;width:77.5px;top:582.9px;font-size:16px;line-height:22.4px;text-align:center;color:#333;letter-spacing:0.5px;white-space:nowrap">н/д</div>
<div class="abs" style="left:1968.9px;width:77.5px;top:582.9px;font-size:16px;line-height:22.4px;text-align:center;color:#333;letter-spacing:0.5px;white-space:nowrap">н/д</div>
<div class="abs" style="left:295.0px;width:146.0px;top:627.0px;font-size:16px;line-height:23.3px;text-align:center;color:#333;letter-spacing:0.5px;white-space:nowrap">Барило<br>Людмила<br>Миколаївна</div>
<div class="abs" style="left:441.0px;width:90.0px;top:650.3px;font-size:16px;line-height:22.4px;text-align:center;color:#333;letter-spacing:0px;white-space:nowrap">-</div>
<div class="abs" style="left:531.0px;width:121.0px;top:650.3px;font-size:16px;line-height:22.4px;text-align:center;color:#333;letter-spacing:0px;white-space:nowrap">-</div>
<div class="abs" style="left:662.5px;top:650.8px;font-size:16px;line-height:23px;color:#333;letter-spacing:0.44px;white-space:nowrap">Немає жодного уроку у розкладі з 01.10.2023 до 30.10.2023</div>
<div class="abs" style="left:295.0px;width:146.0px;top:718.0px;font-size:16px;line-height:23.3px;text-align:center;color:#333;letter-spacing:0.5px;white-space:nowrap">Барилюк<br>Оксана<br>Вікторівна</div>
<div class="abs" style="left:441.0px;width:90.0px;top:741.3px;font-size:16px;line-height:22.4px;text-align:center;color:#333;letter-spacing:0px;white-space:nowrap">-</div>
<div class="abs" style="left:531.0px;width:121.0px;top:741.3px;font-size:16px;line-height:22.4px;text-align:center;color:#333;letter-spacing:0px;white-space:nowrap">-</div>
<div class="abs" style="left:662.5px;top:741.8px;font-size:16px;line-height:23px;color:#333;letter-spacing:0.44px;white-space:nowrap">Немає жодного уроку у розкладі з 01.10.2023 до 30.10.2023</div>
<div class="abs" style="left:295.0px;width:146.0px;top:808.6px;font-size:16px;line-height:23.3px;text-align:center;color:#333;letter-spacing:0.5px;white-space:nowrap">Боровик Олена<br>Іванівна</div>
<div class="abs" style="left:441.0px;width:90.0px;top:820.3px;font-size:16px;line-height:22.4px;text-align:center;color:#333;letter-spacing:0px;white-space:nowrap">-</div>
<div class="abs" style="left:531.0px;width:121.0px;top:820.3px;font-size:16px;line-height:22.4px;text-align:center;color:#333;letter-spacing:0px;white-space:nowrap">-</div>
<div class="abs" style="left:662.5px;top:820.8px;font-size:16px;line-height:23px;color:#333;letter-spacing:0.44px;white-space:nowrap">Немає жодного уроку у розкладі з 01.10.2023 до 30.10.2023</div>
<div class="abs" style="left:295.0px;width:146.0px;top:876.0px;font-size:16px;line-height:23.3px;text-align:center;color:#333;letter-spacing:0.5px;white-space:nowrap">Важна<br>Анастасія<br>Миколаївна</div>
<div class="abs" style="left:441.0px;width:90.0px;top:899.3px;font-size:16px;line-height:22.4px;text-align:center;color:#333;letter-spacing:0px;white-space:nowrap">-</div>
<div class="abs" style="left:531.0px;width:121.0px;top:899.3px;font-size:16px;line-height:22.4px;text-align:center;color:#333;letter-spacing:0px;white-space:nowrap">-</div>
<div class="abs" style="left:662.5px;top:899.8px;font-size:16px;line-height:23px;color:#333;letter-spacing:0.44px;white-space:nowrap">Немає жодного уроку у розкладі з 01.10.2023 до 30.10.2023</div>
<div class="abs" style="left:1875px;top:401px;width:1px;height:516px;background:#c9cdd4"></div></div>
<!--/TABLE-->
<div class="abs" style="left:1899px;top:895px;width:17px;height:20px"><svg width="17" height="20" viewBox="0 0 17 20"><path d="M6 7 L15 7 L10.5 12.5 Z" fill="#505050"/></svg></div>
<div class="abs" style="left:0;top:915px;width:1916px;height:1px;background:#b9bec4"></div><div class="abs" style="left:0;top:916px;width:1916px;height:1px;background:#e6eef8"></div>

</body></html>
